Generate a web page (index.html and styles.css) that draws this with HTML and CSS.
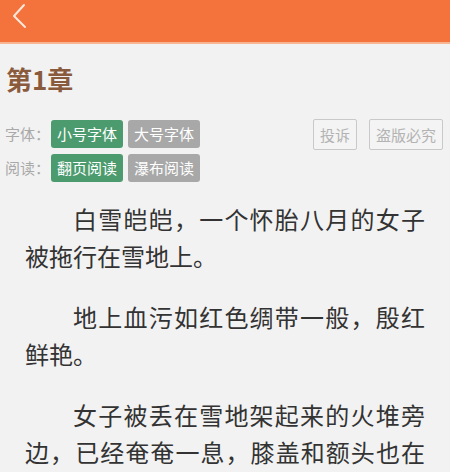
FILE: index.html
```html
<!DOCTYPE html>
<html lang="zh-CN">
<head>
<meta charset="utf-8">
<title>第1章</title>
<link rel="stylesheet" href="styles.css">
</head>
<body>
<header class="topbar">
  <a class="back" href="#" aria-label="返回">
    <svg width="40" height="42" viewBox="0 0 40 42"><polyline points="24,5 14,16 25,27" fill="none" stroke="#fde7d8" stroke-width="2" stroke-linecap="round" stroke-linejoin="round"/></svg>
  </a>
</header>
<section class="head">
  <h1 class="title">第1章</h1>
  <div class="row">
    <span class="label">字体：</span>
    <span class="btn on">小号字体</span>
    <span class="btn off">大号字体</span>
    <span class="spacer"></span>
    <span class="obtn">投诉</span>
    <span class="obtn">盗版必究</span>
  </div>
  <div class="row">
    <span class="label">阅读：</span>
    <span class="btn on">翻页阅读</span>
    <span class="btn off">瀑布阅读</span>
  </div>
</section>
<article class="content">
  <p>白雪皑皑，一个怀胎八月的女子被拖行在雪地上。</p>
  <p>地上血污如红色绸带一般，殷红鲜艳。</p>
  <p>女子被丢在雪地架起来的火堆旁边，已经奄奄一息，膝盖和额头也在流血。</p>
</article>
</body>
</html>
```
FILE: styles.css
```css
html, body {
  margin: 0;
  padding: 0;
}
body {
  background: #f2f2f2;
  font-family: "Noto Sans CJK SC", "Noto Sans", sans-serif;
  width: 450px;
  overflow: hidden;
}
.topbar {
  height: 42px;
  background: #f4733d;
  border-bottom: 2px solid #f8b594;
  display: flex;
  align-items: center;
}
.back {
  display: block;
  width: 40px;
  height: 42px;
}
.back svg {
  display: block;
}
.head {
  padding: 0 7px 0 5px;
}
.title {
  margin: 15px 0 0 1px;
  font-size: 26px;
  line-height: 40px;
  font-weight: bold;
  color: #8a5a3c;
}
.row {
  display: flex;
  align-items: center;
  gap: 5px;
  height: 28px;
}
.row + .row {
  margin-top: 6px;
}
.title + .row {
  margin-top: 21px;
}
.label {
  font-size: 15px;
  color: #a9a9a9;
  width: 41px;
  line-height: 28px;
  white-space: nowrap;
}
.btn {
  font-size: 15px;
  line-height: 28px;
  height: 28px;
  padding: 0 6px;
  border-radius: 3px;
  color: #fff;
}
.btn.on {
  background: #4c9b6e;
}
.btn.off {
  background: #a8a8a8;
}
.spacer {
  flex: 1;
}
.obtn {
  font-size: 15px;
  line-height: 29px;
  height: 29px;
  padding: 0 6px;
  border: 1px solid #c9c9c9;
  border-radius: 2px;
  color: #b3b3b3;
  background: #f4f4f4;
  margin-left: 7px;
}
.content {
  padding: 18px 25px 0 25px;
}
.content p {
  margin: 0 0 24px 0;
  font-size: 24px;
  line-height: 37px;
  text-indent: 2em;
  text-align: justify;
  color: #333;
}
```
